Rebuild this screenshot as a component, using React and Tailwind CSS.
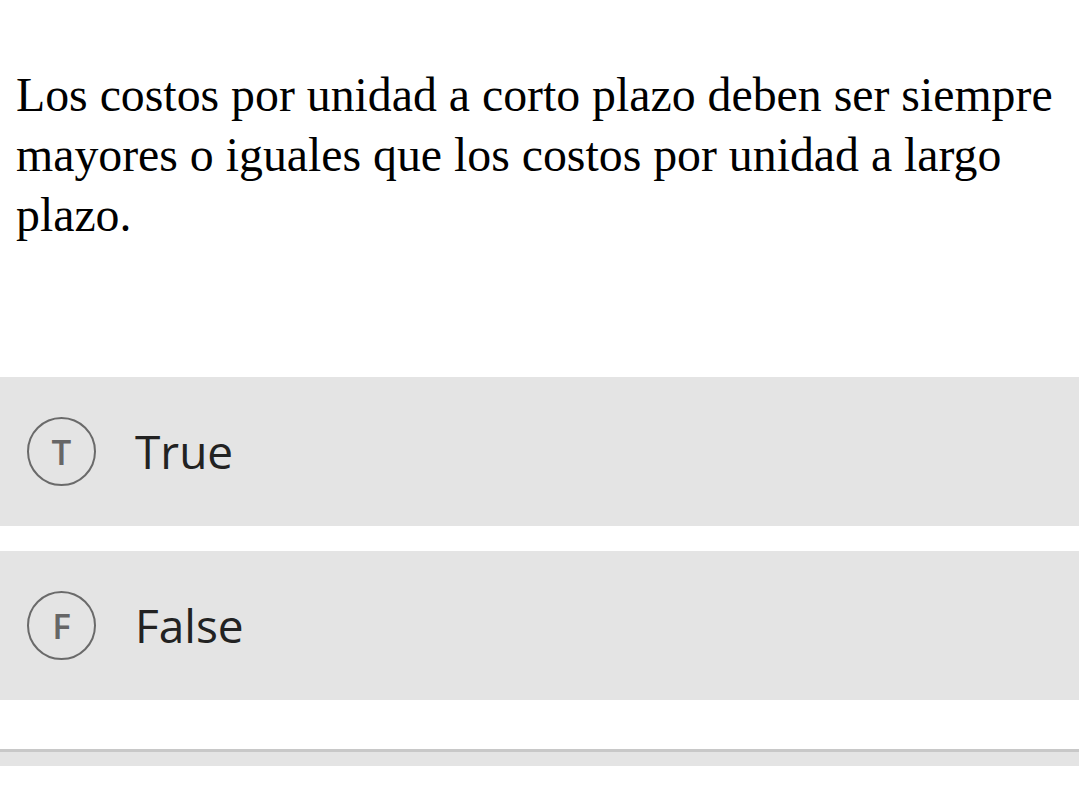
import React from 'react';

function Option({ letter, label }) {
    return (
        <div className="h-[149px] bg-[#e4e4e4] flex items-center pl-[27px]">
            <div className="w-[69px] h-[69px] rounded-full border-[2.5px] border-[#6a6a6a] flex items-center justify-center text-[#666] text-[35px] font-semibold leading-none" style={{ fontFamily: '"Open Sans", sans-serif' }}>
                {letter}
            </div>
            <span className="ml-[39px] text-[46px] text-[#222]" style={{ fontFamily: '"Open Sans", sans-serif' }}>
                {label}
            </span>
        </div>
    );
}

export default function App() {
    return (
        <div className="w-[1079px] h-[793px] bg-white overflow-hidden">
            <p className="pt-[65px] px-[16px] text-[47.8px] leading-[60px] text-black" style={{ fontFamily: '"Liberation Serif", serif' }}>
                Los costos por unidad a corto plazo deben ser siempre mayores o iguales que los costos por unidad a largo plazo.
            </p>
            <div className="mt-[132px] flex flex-col gap-[25px]">
                <Option letter="T" label="True" />
                <Option letter="F" label="False" />
            </div>
            <div className="mt-[49px] h-[17px] border-t-[3px] border-[#c8c8c8] bg-[#e4e4e4]" />
        </div>
    );
}
